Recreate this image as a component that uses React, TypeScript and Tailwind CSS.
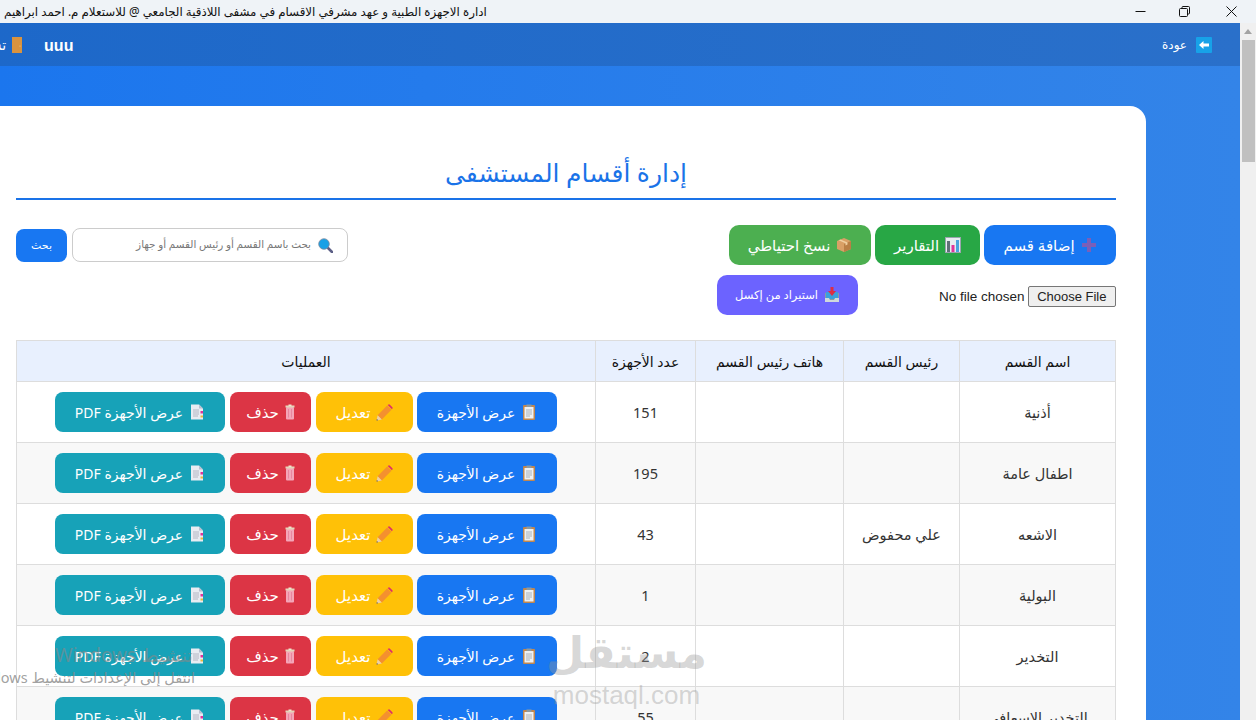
const font = "font-['Noto_Sans','DejaVu_Sans','Liberation_Sans',sans-serif]";

function Plus() {
  return (
    <svg width="16" height="16" viewBox="0 0 16 16" className="shrink-0">
      <path d="M6 1h4v5h5v4h-5v5H6v-5H1V6h5z" fill="#7a5fb8" />
    </svg>
  );
}

function Chart() {
  return (
    <svg width="16" height="16" viewBox="0 0 16 16" className="shrink-0">
      <rect x="0.5" y="0.5" width="15" height="15" fill="#e8edf0" stroke="#9aa5ad" />
      <rect x="2" y="4" width="3" height="11" fill="#5f6f78" />
      <rect x="6.5" y="8" width="3" height="7" fill="#e0349a" />
      <rect x="11" y="3" width="3" height="12" fill="#4aa3df" />
    </svg>
  );
}

function Box() {
  return (
    <svg width="16" height="16" viewBox="0 0 16 16" className="shrink-0">
      <path d="M8 1l7 3v8l-7 3-7-3V4z" fill="#d9a066" />
      <path d="M8 7l7-3v8l-7 3z" fill="#b97f45" />
      <path d="M4.5 2.5l7 3v2l-2 1V6.300l-7-3z" fill="#f0cfa0" />
    </svg>
  );
}

function Inbox() {
  return (
    <svg width="16" height="16" viewBox="0 0 16 16" className="shrink-0">
      <path d="M1 6h14v9H1z" fill="#8a9aa5" />
      <path d="M2 5h12v7H2z" fill="#3aa0dc" />
      <path d="M1 11h4l1 2h4l1-2h4v4H1z" fill="#cfd8dc" />
      <path d="M6.500 0h3v4H12L8 9 4 4h2.500z" fill="#dd2e44" />
    </svg>
  );
}

function Magnifier() {
  return (
    <svg width="15" height="15" viewBox="0 0 15 15" className="shrink-0">
      <path d="M9.500 9.500L14 14" stroke="#5c5f86" strokeWidth="2.600" strokeLinecap="round" />
      <circle cx="6" cy="6" r="5.300" fill="#18a0e6" stroke="#7b8aa0" strokeWidth="0.800" />
    </svg>
  );
}

function Clipboard() {
  return (
    <svg width="16" height="16" viewBox="0 0 16 16" className="shrink-0">
      <rect x="2" y="1" width="12" height="15" rx="1" fill="#c1874f" />
      <rect x="3.500" y="3" width="9" height="11.500" fill="#eef1f3" />
      <rect x="5.500" y="0.500" width="5" height="2.500" fill="#8b9aa3" />
      <path d="M5 6h6M5 8h6M5 10h6M5 12h4" stroke="#9aa5ad" strokeWidth="0.800" />
    </svg>
  );
}

function Pencil() {
  return (
    <svg width="17" height="17" viewBox="0 0 16 16" className="shrink-0">
      <path d="M10.500 1.500L14.500 5.500 5.500 14.500 1.500 10.500z" fill="#f4902f" />
      <path d="M11 1l.800-.500a1 1 0 0 1 1.200.100l2.400 2.400a1 1 0 0 1 .100 1.200L15 5z" fill="#dd2e6a" />
      <path d="M1.500 10.500L5.500 14.500 0.500 15.500z" fill="#edcfa6" />
      <path d="M0.800 14l1.200 1.200-1.500.300z" fill="#444" />
    </svg>
  );
}

function Trash() {
  return (
    <svg width="10" height="16" viewBox="0 0 10 16" className="shrink-0">
      <rect x="1" y="3" width="8" height="12.500" rx="1" fill="#f4a6b8" />
      <rect x="0.500" y="1.500" width="9" height="2" fill="#e3d6ba" />
      <path d="M3.500 5v8.500M6.500 5v8.500" stroke="#e57f98" strokeWidth="0.800" />
      <rect x="3.500" y="0.500" width="3" height="1.500" fill="#f1e6cf" />
    </svg>
  );
}

function Doc() {
  return (
    <svg width="16" height="16" viewBox="0 0 16 16" className="shrink-0">
      <path d="M2 0.500h8l4 4v11H2z" fill="#e9ecf2" />
      <path d="M10 0.500l4 4h-4z" fill="#b9bfd0" />
      <path d="M4 6h6M4 8h6M4 10h6M4 12h5" stroke="#a6aab8" strokeWidth="0.800" />
      <rect x="11.500" y="7" width="2.500" height="2.500" fill="#e0349a" />
      <rect x="11.500" y="11.500" width="2.500" height="2" fill="#e8b93c" />
    </svg>
  );
}

function Door() {
  return (
    <svg width="10" height="16" viewBox="0 0 10 16" className="shrink-0">
      <rect width="10" height="16" fill="#d9933f" />
      <circle cx="8" cy="9" r="0.600" fill="#f4d08a" />
    </svg>
  );
}

function BackArrow() {
  return (
    <svg width="16" height="16" viewBox="0 0 16 16" className="shrink-0">
      <rect width="16" height="16" rx="1" fill="#17a2e8" />
      <path d="M3 8l4.500-4v2.500H13v3H7.500V12z" fill="#fff" />
    </svg>
  );
}

function WindowBar() {
  return (
    <div className="flex h-[23px] shrink-0 items-center justify-between bg-[#eff3f7] pl-[4px]">
      <span dir="rtl" className={`text-[11.85px] text-[#111] ${font}`}>
        ادارة الاجهزة الطبية و عهد مشرفي الاقسام في مشفى اللاذقية الجامعي @ للاستعلام م. احمد ابراهيم
      </span>
      <div className="flex items-center">
        <div className="flex h-[20px] w-[44px] items-center justify-center">
          <svg width="11" height="11" viewBox="0 0 11 11"><path d="M0.500 5.500h10" stroke="#111" /></svg>
        </div>
        <div className="flex h-[20px] w-[44px] items-center justify-center">
          <svg width="11" height="11" viewBox="0 0 11 11" fill="none" stroke="#111">
            <rect x="0.500" y="2.500" width="8" height="8" rx="1" />
            <path d="M3 2.500V1.500a1 1 0 0 1 1-1h5.500a1 1 0 0 1 1 1V7a1 1 0 0 1-1 1h-1" />
          </svg>
        </div>
        <div className="flex h-[20px] w-[50px] items-center justify-center">
          <svg width="11" height="11" viewBox="0 0 11 11" fill="none" stroke="#111"><path d="M0.500 0.500l10 10M10.500 0.500l-10 10" /></svg>
        </div>
      </div>
    </div>
  );
}

function Scrollbar() {
  return (
    <div className="flex w-[16px] shrink-0 flex-col items-center bg-[#f0f0f0]">
      <div className="flex h-[17px] items-center justify-center">
        <svg width="8" height="5" viewBox="0 0 8 5"><path d="M4 0l4 5H0z" fill="#a3a3a3" /></svg>
      </div>
      <div className="h-[122px] w-[13px] bg-[#c0c0c0]" />
    </div>
  );
}

function TopBar() {
  return (
    <div className="flex h-[43px] w-[1400px] shrink-0 items-center justify-between bg-gradient-to-l from-[#2a70ca] to-[#1b67c9] pr-[28px]">
      <div className="flex items-center gap-[9px] text-[12px] text-white">
        <BackArrow />
        <span>عودة</span>
      </div>
      <div className="flex items-center gap-[22px] pl-[90px] text-white">
        <span className="mt-[2px] font-['Liberation_Sans',sans-serif] text-[16px] font-bold">uuu</span>
        <div className="flex items-center gap-[6px] text-[14px]">
          <Door />
          <span className="whitespace-nowrap">تسجيل خروج</span>
        </div>
      </div>
    </div>
  );
}

function ActionBtn({ className, children }: { className: string; children: React.ReactNode }) {
  return (
    <button className={`flex h-[40px] items-center justify-center gap-[6px] rounded-[8px] text-white ${className}`}>
      {children}
    </button>
  );
}

const rows = [
  ["أذنية", "", "", "151"],
  ["اطفال عامة", "", "", "195"],
  ["الاشعه", "علي محفوض", "", "43"],
  ["البولية", "", "", "1"],
  ["التخدير", "", "", "2"],
  ["التخدير الاسعافي", "", "", "55"],
];

function DeptTable() {
  const th = "h-[41px] border border-[#dddddd] bg-[#e8f0fe] text-center text-[14px] font-normal text-[#111]";
  const td = "h-[61px] border border-[#dddddd] text-center text-[14.5px] text-[#333]";
  return (
    <table className="mt-[25px] w-full table-fixed border-collapse">
      <colgroup>
        <col className="w-[156px]" />
        <col className="w-[116px]" />
        <col className="w-[148px]" />
        <col className="w-[100px]" />
        <col />
      </colgroup>
      <thead>
        <tr>
          <th className={th}>اسم القسم</th>
          <th className={th}>رئيس القسم</th>
          <th className={th}>هاتف رئيس القسم</th>
          <th className={th}>عدد الأجهزة</th>
          <th className={th}>العمليات</th>
        </tr>
      </thead>
      <tbody>
        {rows.map((r, i) => (
          <tr key={r[0]} className={i % 2 === 1 ? "bg-[#f8f8f8]" : "bg-white"}>
            <td className={`${td} pt-[2px]`}>{r[0]}</td>
            <td className={`${td} pt-[2px]`}>{r[1]}</td>
            <td className={`${td} pt-[2px]`}>{r[2]}</td>
            <td className={`${td} pt-[2px]`}>{r[3]}</td>
            <td className={td}>
              <div className="flex items-center justify-center gap-[4px]">
                <ActionBtn className="w-[140px] bg-[#1877f2] text-[14px]"><Clipboard />عرض الأجهزة</ActionBtn>
                <ActionBtn className="w-[97px] bg-[#ffc107] text-[15px]"><Pencil />تعديل</ActionBtn>
                <ActionBtn className="mr-[1px] w-[81px] bg-[#dc3545] text-[15px]"><Trash />حذف</ActionBtn>
                <ActionBtn className="mr-[1px] w-[170px] bg-[#17a2b8] text-[14px]"><Doc />عرض الأجهزة PDF</ActionBtn>
              </div>
            </td>
          </tr>
        ))}
      </tbody>
    </table>
  );
}

function Card() {
  return (
    <div className="w-[1160px] shrink-0 rounded-t-[16px] bg-white px-[30px] pt-[48px] pb-[40px]">
      <h1 className="border-b-2 border-[#1a73e8] pb-[8px] text-center text-[25px] leading-[36px] font-normal text-[#1a73e8]">
        إدارة أقسام المستشفى
      </h1>

      <div className="mt-[25px] flex items-center justify-between">
        <div className="flex gap-[4px]">
          <ActionBtn className="w-[132px] rounded-[10px] bg-[#1877f2] text-[15px]"><Plus />إضافة قسم</ActionBtn>
          <ActionBtn className="w-[105px] rounded-[10px] bg-[#28a745] text-[15px]"><Chart />التقارير</ActionBtn>
          <ActionBtn className="w-[142px] rounded-[10px] bg-[#4caf50] text-[15px]"><Box />نسخ احتياطي</ActionBtn>
        </div>
        <div className="flex items-center gap-[5px]">
          <div className="relative">
            <input
              placeholder="بحث باسم القسم أو رئيس القسم أو جهاز"
              className="h-[34px] w-[276px] rounded-[8px] border border-[#cccccc] pr-[36px] pb-[2px] text-[10.4px] placeholder:text-[#777]"
            />
            <div className="absolute top-[10px] right-[15px]"><Magnifier /></div>
          </div>
          <button className="h-[33px] w-[51px] rounded-[8px] bg-[#1877f2] text-[11px] text-white">بحث</button>
        </div>
      </div>

      <div className="mt-[10px] flex items-center gap-[68px]">
        <input type="file" className="mt-[3px] w-[190px] font-['Liberation_Sans',sans-serif] text-[13.5px] text-[#222] file:ml-[3px] file:h-[21px] file:rounded-[2px] file:border file:border-[#767676] file:bg-[#efefef] file:px-[8.5px] file:text-[13px]" />
        <ActionBtn className="w-[141px] rounded-[10px] bg-[#6c63ff] text-[11.5px]"><Inbox />استيراد من إكسل</ActionBtn>
      </div>

      <DeptTable />
    </div>
  );
}

export default function App() {
  return (
    <div className={`relative flex h-screen flex-col overflow-hidden ${font}`}>
      <WindowBar />
      <div className="flex min-h-0 flex-1">
        <div dir="rtl" className="flex min-w-0 flex-1 flex-col overflow-hidden bg-gradient-to-l from-[#3384e8] to-[#1b76ee]">
          <TopBar />
          <div className="flex pt-[40px] pr-[94px]">
            <Card />
          </div>
        </div>
        <Scrollbar />
      </div>

      {/* watermarks sit on top of the page */}
      <div dir="rtl" className="pointer-events-none absolute top-[641px] left-[55px] text-[19px] whitespace-nowrap text-[#888]/60">تنشيط Windows</div>
      <div dir="rtl" className="pointer-events-none absolute top-[667px] right-[1061px] text-[14.5px] whitespace-nowrap text-[#888]/80">انتقل إلى الإعدادات لتنشيط Windows</div>
      <div className="pointer-events-none absolute top-[620px] left-[550px] flex w-[153px] flex-col items-center font-bold text-[#999]/40">
        <span dir="rtl" className="text-[44px] leading-[62px]">مستقل</span>
        <span className="font-['Liberation_Sans',sans-serif] text-[26px] leading-[26px] font-normal">mostaql.com</span>
      </div>
    </div>
  );
}
